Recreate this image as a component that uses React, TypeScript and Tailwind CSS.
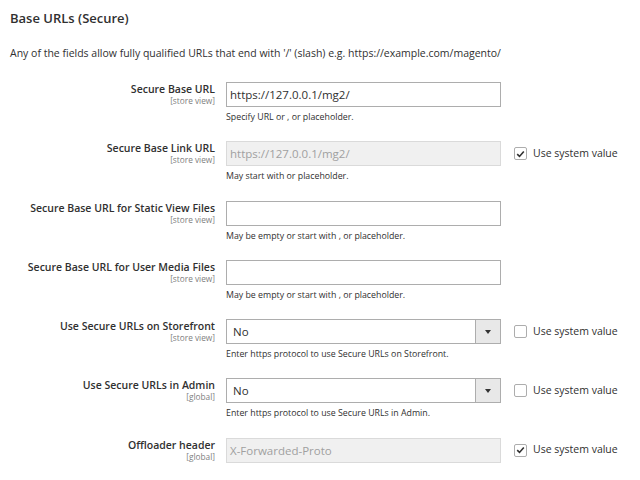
import React from 'react';

type Row = {
  label: string;
  scope: string;
  kind: 'text' | 'select';
  value: string;
  disabled?: boolean;
  note?: string;
  system?: 'checked' | 'unchecked';
};

const rows: Row[] = [
  { label: 'Secure Base URL', scope: '[store view]', kind: 'text', value: 'https://127.0.0.1/mg2/', note: 'Specify URL or , or placeholder.' },
  { label: 'Secure Base Link URL', scope: '[store view]', kind: 'text', value: 'https://127.0.0.1/mg2/', disabled: true, note: 'May start with or placeholder.', system: 'checked' },
  { label: 'Secure Base URL for Static View Files', scope: '[store view]', kind: 'text', value: '', note: 'May be empty or start with , or placeholder.' },
  { label: 'Secure Base URL for User Media Files', scope: '[store view]', kind: 'text', value: '', note: 'May be empty or start with , or placeholder.' },
  { label: 'Use Secure URLs on Storefront', scope: '[store view]', kind: 'select', value: 'No', note: 'Enter https protocol to use Secure URLs on Storefront.', system: 'unchecked' },
  { label: 'Use Secure URLs in Admin', scope: '[global]', kind: 'select', value: 'No', note: 'Enter https protocol to use Secure URLs in Admin.', system: 'unchecked' },
  { label: 'Offloader header', scope: '[global]', kind: 'text', value: 'X-Forwarded-Proto', disabled: true, system: 'checked' },
];

function Checkbox({ checked }: { checked: boolean }) {
  return (
    <span className="flex h-[13px] w-[13px] items-center justify-center rounded-[2px] border border-[#adadad] bg-white">
      {checked && (
        <svg width="9" height="8" viewBox="0 0 9 8">
          <path d="M1.2 4.2 L3.5 6.4 L7.8 1.4" fill="none" stroke="#303030" strokeWidth="1.6" />
        </svg>
      )}
    </span>
  );
}

function Field({ row }: { row: Row }) {
  if (row.kind === 'select') {
    return (
      <div className="flex h-[25px] w-[275px] border border-[#adadad] bg-white">
        <div className="flex flex-1 items-center pl-[6px] text-[11.5px] text-[#303030]">{row.value}</div>
        <div className="flex w-[25px] items-center justify-center border-l border-[#adadad] bg-[#e8e8e8]">
          <svg width="6" height="4" viewBox="0 0 6 4">
            <path d="M0 0 L6 0 L3 4 Z" fill="#333" />
          </svg>
        </div>
      </div>
    );
  }
  return (
    <div
      className={
        row.disabled
          ? 'flex h-[25px] w-[275px] items-center border border-[#dadada] bg-[#f0f0f0] pl-[3px] text-[11.5px] text-[#a0a0a0]'
          : 'flex h-[25px] w-[275px] items-center border border-[#adadad] bg-white pl-[3px] text-[11.5px] text-[#303030]'
      }
    >
      {row.value}
    </div>
  );
}

export default function App() {
  return (
    <div className="min-h-[480px] w-[640px] bg-white pl-[10px] text-[#303030]" style={{ fontFamily: '"Open Sans", "Liberation Sans", sans-serif' }}>
      <h2 className="pt-[9px] text-[13px] font-semibold leading-[18px]">Base URLs (Secure)</h2>
      <p className="mt-[19px] text-[10.5px] leading-[14px]">
        Any of the fields allow fully qualified URLs that end with '/' (slash) e.g. https://example.com/magento/
      </p>
      <div className="mt-[22px] flex flex-col">
        {rows.map((row) => (
          <div key={row.label} className="flex h-[59.3px] items-start">
            <div className="w-[205px] pt-[1px] text-right">
              <div className="text-[10.5px] font-semibold leading-[13px]">{row.label}</div>
              <div className="text-[8.3px] leading-[10px] text-[#808080]">{row.scope}</div>
            </div>
            <div className="ml-[11px] flex flex-col">
              <Field row={row} />
              {row.note && <div className="mt-[4px] text-[8.8px] leading-[12px]">{row.note}</div>}
            </div>
            {row.system && (
              <label className="ml-[13px] flex h-[25px] items-center gap-[6px] text-[10.5px]">
                <Checkbox checked={row.system === 'checked'} />
                <span>Use system value</span>
              </label>
            )}
          </div>
        ))}
      </div>
    </div>
  );
}
